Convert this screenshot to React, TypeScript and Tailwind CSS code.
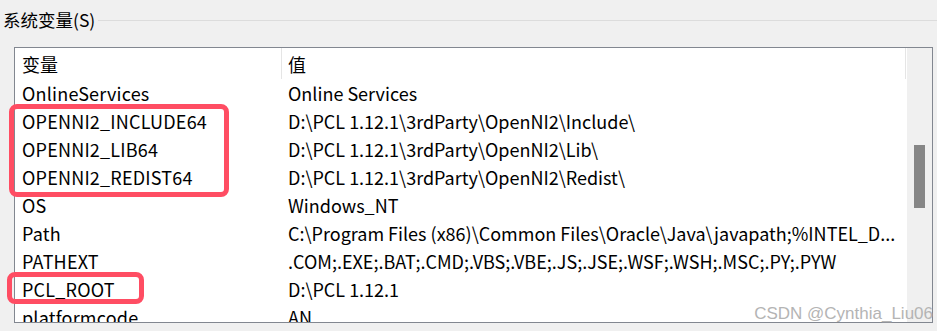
import React from "react";

const rows: [string, string][] = [
  ["OnlineServices", "Online Services"],
  ["OPENNI2_INCLUDE64", "D:\\PCL 1.12.1\\3rdParty\\OpenNI2\\Include\\"],
  ["OPENNI2_LIB64", "D:\\PCL 1.12.1\\3rdParty\\OpenNI2\\Lib\\"],
  ["OPENNI2_REDIST64", "D:\\PCL 1.12.1\\3rdParty\\OpenNI2\\Redist\\"],
  ["OS", "Windows_NT"],
  ["Path", "C:\\Program Files (x86)\\Common Files\\Oracle\\Java\\javapath;%INTEL_D..."],
  ["PATHEXT", ".COM;.EXE;.BAT;.CMD;.VBS;.VBE;.JS;.JSE;.WSF;.WSH;.MSC;.PY;.PYW"],
  ["PCL_ROOT", "D:\\PCL 1.12.1"],
  ["platformcode", "AN"],
];

const font = { fontFamily: '"Noto Sans CJK SC", "Noto Sans", sans-serif' };

export default function App() {
  return (
    <div
      className="relative w-[937px] h-[331px] bg-[#f0f0f0] overflow-hidden text-black"
      style={font}
    >
      {/* group title */}
      <div className="flex items-center h-[40px] pl-[3px]">
        <span className="text-[17.5px] leading-none">系统变量(S)</span>
        <div className="flex-1 ml-[3px] h-px bg-[#dcdcdc]" />
      </div>
      {/* list box */}
      <div className="ml-[14px] mt-[7px] w-[919px] h-[276px] border border-[#828790] bg-white flex overflow-hidden">
        <div className="flex-1 flex flex-col overflow-hidden">
          <div className="flex h-[31px] shrink-0 items-center text-[18px]">
            <div className="w-[267px] pl-[7px] border-r border-[#e5e5e5] h-full flex items-center pt-[1px]">变量</div>
            <div className="flex-1 pl-[6px] border-r border-[#e5e5e5] h-full flex items-center pt-[1px]">值</div>
          </div>
          {rows.map(([k, v]) => (
            <div key={k} className="flex h-[28px] shrink-0 items-center text-[18px] whitespace-nowrap">
              <div className="w-[267px] pl-[7px] tracking-[0.2px]">{k}</div>
              <div className="flex-1 pl-[6px] overflow-hidden">{v}</div>
            </div>
          ))}
        </div>
        <div className="w-[26px] bg-[#f0f0f0] border-l border-white flex justify-center">
          <div className="w-[11px] h-[63px] mt-[97px] bg-[#868686]" />
        </div>
      </div>
      {/* highlight boxes */}
      <div className="absolute left-[9px] top-[104px] w-[220px] h-[93px] border-[5px] border-[#ff4d63] rounded-[8px]" />
      <div className="absolute left-[7px] top-[272px] w-[137px] h-[32px] border-[5px] border-[#ff4d63] rounded-[8px]" />
      {/* watermark */}
      <div
        className="absolute right-[4px] top-[305px] text-[17px] leading-none text-[#b4b4b4]"
        style={{ fontFamily: '"Liberation Sans", Arial, sans-serif' }}
      >
        CSDN @Cynthia_Liu06
      </div>
    </div>
  );
}
